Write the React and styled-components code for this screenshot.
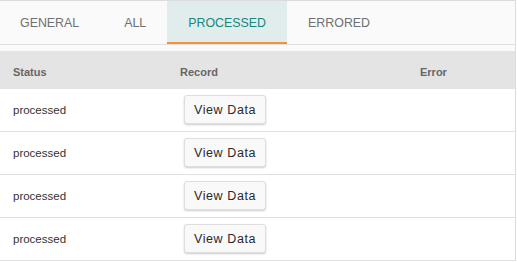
import React, {useState} from 'react'
import styled, {createGlobalStyle} from 'styled-components'

const tabs = ['General', 'All', 'Processed', 'Errored']
const rows = ['processed', 'processed', 'processed', 'processed']

function App() {
    const [active, setActive] = useState('Processed')

    return (
        <>
            <Global/>
            <Panel>
                <TabBar>
                    {tabs.map(t => (
                        <Tab key={t} active={t === active} onClick={() => setActive(t)}>{t}</Tab>
                    ))}
                </TabBar>
                <Spacer/>
                <Table>
                    <HeadRow>
                        <HeadCell>Status</HeadCell>
                        <HeadCell>Record</HeadCell>
                        <HeadCell>Error</HeadCell>
                    </HeadRow>
                    {rows.map((status, i) => (
                        <Row key={i}>
                            <Cell>{status}</Cell>
                            <Cell><Button>View Data</Button></Cell>
                            <Cell></Cell>
                        </Row>
                    ))}
                </Table>
            </Panel>
        </>
    )
}

export default App

const Global = createGlobalStyle`
body{
    margin:0;
    background:#fff;
    font-family:"Liberation Sans", Arial, sans-serif;
}
`;

const Panel = styled.div`
width:515px;
border-top:1px solid #dcdcdc;
border-right:1px solid #dcdcdc;
background:#fafafa;
`;

const TabBar = styled.div`
display:flex;
height:43px;
border-bottom:1px solid #e0e0e0;
background:#fafafa;
`;

const Tab = styled.div`
display:flex;
align-items:center;
justify-content:center;
padding:0 21px;
font-size:12.4px;
text-transform:uppercase;
color:${({active})=>active?"#17877a":"#707070"};
background:${({active})=>active?"#e1eded":"transparent"};
box-shadow:${({active})=>active?"inset 0 -2px 0 #f5913a":"none"};
cursor:pointer;
&:first-child{
    padding-left:20px;
    margin-right:3px;
}
`;

const Spacer = styled.div`
height:6px;
background:#fafafa;
`;

const Table = styled.div`
display:flex;
flex-direction:column;
background:#fff;
`;

const HeadRow = styled.div`
display:grid;
grid-template-columns:167px 240px 1fr;
height:38px;
padding-top:3px;
box-sizing:border-box;
align-items:center;
background:#e4e4e4;
`;

const HeadCell = styled.div`
padding-left:13px;
font-size:11px;
font-weight:bold;
color:#666;
`;

const Row = styled.div`
display:grid;
grid-template-columns:167px 240px 1fr;
height:42px;
align-items:center;
border-bottom:1px solid #e0e0e0;
background:#fff;
`;

const Cell = styled.div`
padding-left:13px;
font-size:11.5px;
color:#333;
`;

const Button = styled.button`
margin-left:4px;
margin-top:-1px;
width:82px;
height:29px;
font-family:"Liberation Sans", Arial, sans-serif;
font-size:12.5px;
letter-spacing:0.6px;
color:#2a2a2a;
background:#f9f9f9;
border:1px solid #dedede;
border-radius:3px;
box-shadow:0 1px 2px rgba(0,0,0,0.2);
cursor:pointer;
`;
